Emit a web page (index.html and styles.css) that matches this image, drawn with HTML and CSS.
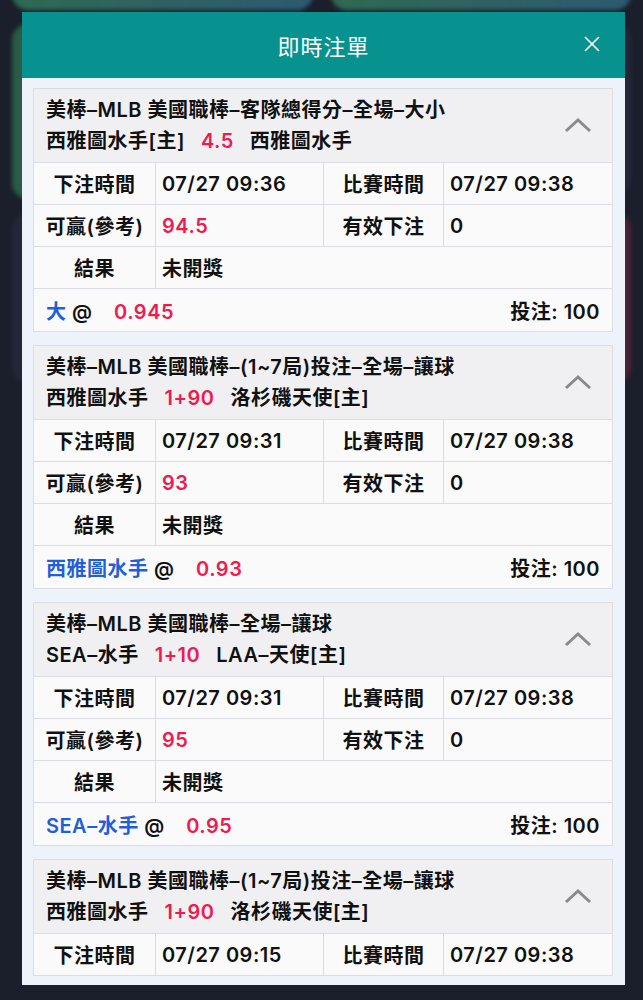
FILE: index.html
```html
<!DOCTYPE html>
<html lang="zh-Hant">
  <head>
    <meta charset="UTF-8" />
    <meta name="viewport" content="width=device-width, initial-scale=1.0" />
    <title>即時注單</title>
    <link rel="stylesheet" href="styles.css">
  </head>
  <body>
    <div class="backdrop">
      <div class="tile tile-top"></div>
      <div class="tile tile-top"></div>
      <div class="tile tile-green"></div>
      <div class="tile tile-plain"></div>
      <div class="tile tile-plain"></div>
      <div class="tile tile-red"></div>
    </div>

    <div class="modal">
      <div class="modal-head">
        <span class="modal-title">即時注單</span>
        <svg class="close" width="18" height="18" viewBox="0 0 18 18">
          <path d="M2 2 L16 16 M16 2 L2 16" stroke="#fff" stroke-width="1.6" fill="none"/>
        </svg>
      </div>

      <div class="modal-body">

        <div class="bet">
          <div class="bet-head">
            <div class="bet-title">
              <div>美棒–MLB 美國職棒–客隊總得分–全場–大小</div>
              <div>西雅圖水手[主]<span class="red gap">4.5</span>西雅圖水手</div>
            </div>
            <svg class="chev" width="28" height="16" viewBox="0 0 28 16">
              <path d="M2 14 L14 3 L26 14" stroke="#8a8a8e" stroke-width="3" fill="none"/>
            </svg>
          </div>
          <div class="bet-grid">
            <div class="cell lbl">下注時間</div>
            <div class="cell">07/27 09:36</div>
            <div class="cell lbl">比賽時間</div>
            <div class="cell">07/27 09:38</div>
            <div class="cell lbl">可贏(參考)</div>
            <div class="cell red">94.5</div>
            <div class="cell lbl">有效下注</div>
            <div class="cell">0</div>
            <div class="cell lbl">結果</div>
            <div class="cell wide">未開獎</div>
          </div>
          <div class="bet-foot">
            <div><span class="blue">大</span> @ <span class="red odds">0.945</span></div>
            <div>投注: 100</div>
          </div>
        </div>

        <div class="bet">
          <div class="bet-head">
            <div class="bet-title">
              <div>美棒–MLB 美國職棒–(1~7局)投注–全場–讓球</div>
              <div>西雅圖水手<span class="red gap">1+90</span>洛杉磯天使[主]</div>
            </div>
            <svg class="chev" width="28" height="16" viewBox="0 0 28 16">
              <path d="M2 14 L14 3 L26 14" stroke="#8a8a8e" stroke-width="3" fill="none"/>
            </svg>
          </div>
          <div class="bet-grid">
            <div class="cell lbl">下注時間</div>
            <div class="cell">07/27 09:31</div>
            <div class="cell lbl">比賽時間</div>
            <div class="cell">07/27 09:38</div>
            <div class="cell lbl">可贏(參考)</div>
            <div class="cell red">93</div>
            <div class="cell lbl">有效下注</div>
            <div class="cell">0</div>
            <div class="cell lbl">結果</div>
            <div class="cell wide">未開獎</div>
          </div>
          <div class="bet-foot">
            <div><span class="blue">西雅圖水手</span> @ <span class="red odds">0.93</span></div>
            <div>投注: 100</div>
          </div>
        </div>

        <div class="bet">
          <div class="bet-head">
            <div class="bet-title">
              <div>美棒–MLB 美國職棒–全場–讓球</div>
              <div>SEA–水手<span class="red gap">1+10</span>LAA–天使[主]</div>
            </div>
            <svg class="chev" width="28" height="16" viewBox="0 0 28 16">
              <path d="M2 14 L14 3 L26 14" stroke="#8a8a8e" stroke-width="3" fill="none"/>
            </svg>
          </div>
          <div class="bet-grid">
            <div class="cell lbl">下注時間</div>
            <div class="cell">07/27 09:31</div>
            <div class="cell lbl">比賽時間</div>
            <div class="cell">07/27 09:38</div>
            <div class="cell lbl">可贏(參考)</div>
            <div class="cell red">95</div>
            <div class="cell lbl">有效下注</div>
            <div class="cell">0</div>
            <div class="cell lbl">結果</div>
            <div class="cell wide">未開獎</div>
          </div>
          <div class="bet-foot">
            <div><span class="blue">SEA–水手</span> @ <span class="red odds">0.95</span></div>
            <div>投注: 100</div>
          </div>
        </div>

        <div class="bet">
          <div class="bet-head">
            <div class="bet-title">
              <div>美棒–MLB 美國職棒–(1~7局)投注–全場–讓球</div>
              <div>西雅圖水手<span class="red gap">1+90</span>洛杉磯天使[主]</div>
            </div>
            <svg class="chev" width="28" height="16" viewBox="0 0 28 16">
              <path d="M2 14 L14 3 L26 14" stroke="#8a8a8e" stroke-width="3" fill="none"/>
            </svg>
          </div>
          <div class="bet-grid">
            <div class="cell lbl">下注時間</div>
            <div class="cell">07/27 09:15</div>
            <div class="cell lbl">比賽時間</div>
            <div class="cell">07/27 09:38</div>
            <div class="cell lbl">可贏(參考)</div>
            <div class="cell red">93</div>
            <div class="cell lbl">有效下注</div>
            <div class="cell">0</div>
            <div class="cell lbl">結果</div>
            <div class="cell wide">未開獎</div>
          </div>
          <div class="bet-foot">
            <div><span class="blue">西雅圖水手</span> @ <span class="red odds">0.93</span></div>
            <div>投注: 100</div>
          </div>
        </div>

      </div>
    </div>
  </body>
</html>
```

FILE: styles.css
```css
html,
body {
  margin: 0;
  height: 100%;
  overflow: hidden;
  background-color: #1b1f2c;
  font-family: Inter, "Noto Sans CJK TC", sans-serif;
}

/* blurred lobby behind the modal */
.backdrop {
  display: grid;
  grid-template-columns: 1fr 1fr;
  gap: 14px 18px;
  padding: 0 12px;
  margin-top: -150px;
  filter: blur(2px);
}
.tile {
  height: 160px;
  border-radius: 16px;
}
.tile-top {
  background: linear-gradient(90deg, #2f6a52, #2c5a72);
}
.tile-green {
  height: 175px;
  background: #2a5c47;
}
.tile-plain {
  height: 170px;
  background: #232838;
}
.tile-red {
  height: 170px;
  background: #4a2434;
}

.modal {
  position: fixed;
  left: 22px;
  top: 12px;
  width: 603px;
  height: 973px;
  box-sizing: border-box;
  padding-bottom: 9px;
  display: flex;
  flex-direction: column;
  background-color: #eef2fa;
  overflow: hidden;
}
.modal-head {
  flex: none;
  height: 66px;
  background-color: #07928f;
  display: flex;
  align-items: center;
  justify-content: center;
  position: relative;
}
.modal-title {
  color: #fff;
  font-size: 22px;
  font-weight: 400;
  letter-spacing: 1px;
}
.close {
  position: absolute;
  right: 24px;
  top: 23px;
}
.modal-body {
  flex: 1;
  overflow: hidden;
  padding: 10px 12px 0 11px;
  display: flex;
  flex-direction: column;
  gap: 13px;
}

.bet {
  flex: none;
  border: 1px solid #dcdde2;
  background-color: #fafafa;
  font-size: 20px;
  font-weight: 600;
  letter-spacing: 0.5px;
  color: #111;
}
.bet-head {
  height: 73px;
  background-color: #f0f0f2;
  display: flex;
  align-items: center;
  justify-content: space-between;
  padding: 0 20px 0 12px;
}
.bet-title {
  line-height: 31px;
}
.chev {
  margin-top: -2px;
}
.gap {
  margin: 0 16px 0 16px;
}

.bet-grid {
  display: grid;
  grid-template-columns: 121px 168px 120px 1fr;
}
.cell {
  height: 41px;
  border-top: 1px solid #dcdde2;
  border-left: 1px solid #dcdde2;
  display: flex;
  align-items: center;
  padding-left: 6px;
}
.cell.lbl {
  justify-content: center;
  padding: 0;
}
.cell:nth-child(4n+1) {
  border-left: none;
}
.cell.wide {
  grid-column: span 3;
}

.bet-foot {
  height: 42px;
  border-top: 1px solid #dcdde2;
  display: flex;
  align-items: center;
  justify-content: space-between;
  padding: 0 12px 0 12px;
}
.odds {
  margin-left: 16px;
}
.red {
  color: #ef1a4f;
}
.blue {
  color: #1f5fd8;
}
```
